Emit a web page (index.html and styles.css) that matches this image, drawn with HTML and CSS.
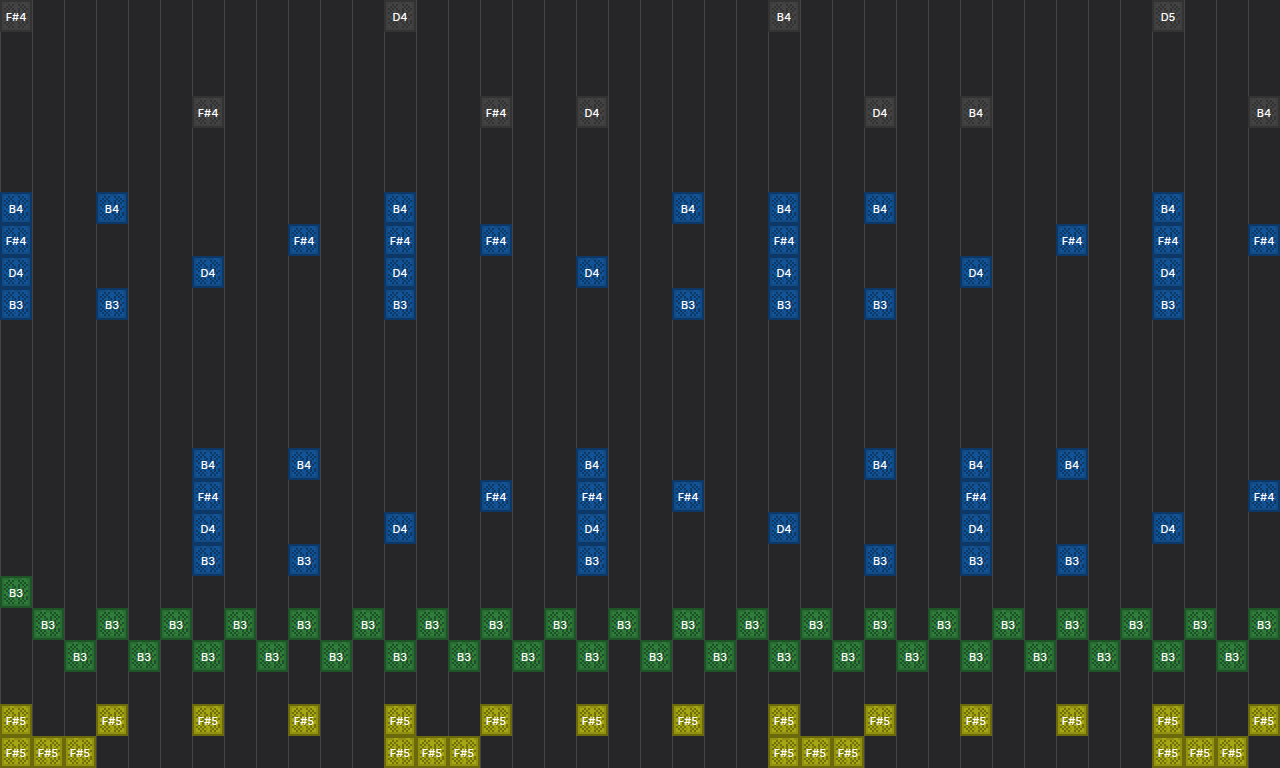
FILE: index.html
```
<!DOCTYPE html>
<html lang="en">
<head>
  <meta charset="UTF-8" />
  <meta name="viewport" content="width=device-width, initial-scale=1.0" />
  <title>Note Block Editor</title>
  <link rel="stylesheet" href="styles.css">
</head>
<body>
  <!-- Block texture, 16x16 pixels -->
  <svg class="defs" width="0" height="0" aria-hidden="true">
    <symbol id="block" viewBox="0 0 16 16" shape-rendering="crispEdges">
      <rect class="edge" width="16" height="16" />
      <rect class="face" x="1" y="1" width="14" height="14" />
      <path id="mids" class="mids" d="" />
      <path id="dots" class="dots" d="" />
    </symbol>
  </svg>

  <main id="grid" class="grid"></main>

  <script src="script.js"></script>
</body>
</html>
```
FILE: styles.css
```
body {
  margin: 0;
  min-height: 100vh;
  background-color: #262628;
  font-family: Inter, "Liberation Sans", Arial, sans-serif;
  color: #fff;
  overflow: hidden;
}

.defs {
  display: block;
}

.grid {
  display: grid;
  grid-template-columns: repeat(auto-fill, 32px);
  grid-auto-rows: 32px;
  min-height: 100vh;
  background-image: linear-gradient(to right, #454547 1px, transparent 1px);
  background-size: 32px 100%;
}

.note {
  display: grid;
  place-items: center;
  font-size: 11px;
  line-height: 16px;
  font-weight: 500;
}

.note svg,
.note span {
  grid-area: 1 / 1;
}

.note span {
  padding-top: 2px;
}

.note svg {
  width: 32px;
  height: 32px;
}

.edge {
  fill: var(--edge);
}

.face {
  fill: var(--face);
}

.mids {
  fill: var(--mids);
}

.dots {
  fill: var(--dots);
}

.gray {
  --edge: #333333;
  --face: #444444;
  --mids: #3f3f3f;
  --dots: #323232;
}

.blue {
  --edge: #0d3764;
  --face: #135498;
  --mids: #124a86;
  --dots: #0e3864;
}

.green {
  --edge: #1f5428;
  --face: #2f7d3b;
  --mids: #286c33;
  --dots: #1e5027;
}

.yellow {
  --edge: #6a690c;
  --face: #a6a513;
  --mids: #929110;
  --dots: #706f0d;
}
```
FILE: script.js
```
// Pixels of the block face, one string per row
const pattern = [
  "++++..++++..++",
  "+..#.#..#.#..+",
  "+.#.#....#.#.+",
  "+#.#.#..#.#.#+",
  "+.#..+#.#..#.+",
  "+#.#.#..#.#..+",
  "+.#.#.+.#.#.#+",
  "+..#.#..+#.#.+",
  "+#..#.#.#.#..+",
  "+.#.#..#..#.#+",
  "+#.#.#..#.#.#+",
  "+.#.#.+.+#.#.+",
  "+..#.#..#.#..+",
  "++++++++++++++"
];

function draw(id, mark) {
  let d = "";
  pattern.forEach((row, y) => {
    [...row].forEach((c, x) => {
      if (c === mark) d += `M${x + 1} ${y + 1}h1v1h-1z`;
    });
  });
  document.getElementById(id).setAttribute("d", d);
}

draw("mids", "+");
draw("dots", "#");

// Columns from start to the last tick
function every(start, step) {
  const cols = [];
  for (let i = start; i < 40; i += step) cols.push(i);
  return cols;
}

// layer, note, colour, ticks
const notes = [
  [0, "F#4", "gray", [0]],
  [0, "D4", "gray", [12]],
  [0, "B4", "gray", [24]],
  [0, "D5", "gray", [36]],
  [3, "F#4", "gray", [6, 15]],
  [3, "D4", "gray", [18, 27]],
  [3, "B4", "gray", [30, 39]],
  [6, "B4", "blue", [0, 3, 12, 21, 24, 27, 36]],
  [7, "F#4", "blue", [0, 9, 12, 15, 24, 33, 36, 39]],
  [8, "D4", "blue", [0, 6, 12, 18, 24, 30, 36]],
  [9, "B3", "blue", [0, 3, 12, 21, 24, 27, 36]],
  [14, "B4", "blue", [6, 9, 18, 27, 30, 33]],
  [15, "F#4", "blue", [6, 15, 18, 21, 30, 39]],
  [16, "D4", "blue", [6, 12, 18, 24, 30, 36]],
  [17, "B3", "blue", [6, 9, 18, 27, 30, 33]],
  [18, "B3", "green", [0]],
  [19, "B3", "green", [1, ...every(3, 2)]],
  [20, "B3", "green", every(2, 2)],
  [22, "F#5", "yellow", every(0, 3)],
  [23, "F#5", "yellow", [0, 1, 2, 12, 13, 14, 24, 25, 26, 36, 37, 38]]
];

const grid = document.getElementById("grid");

notes.forEach(([layer, key, color, ticks]) => {
  ticks.forEach((tick) => {
    const note = document.createElement("div");
    note.className = "note " + color;
    note.style.gridArea = `${layer + 1} / ${tick + 1}`;
    note.innerHTML = `<svg aria-hidden="true"><use href="#block" /></svg><span>${key}</span>`;
    grid.appendChild(note);
  });
});
```
